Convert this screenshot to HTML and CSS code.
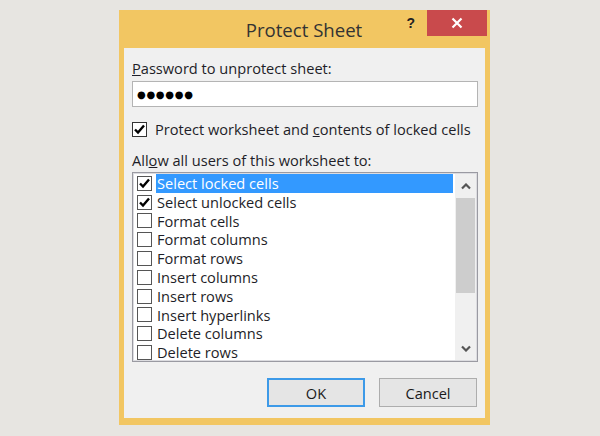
FILE: index.html
```html
<!DOCTYPE html>
<html>
<head>
<meta charset="utf-8">
<link rel="stylesheet" href="styles.css">
</head>
<body>
<div class="dialog">
  <div class="titlebar">
    <div></div>
    <div class="title">Protect Sheet</div>
    <div class="controls">
      <span class="help">?</span>
      <span class="close"><svg width="12" height="12" viewBox="0 0 12 12"><path d="M1.5 1.5L10.5 10.5M10.5 1.5L1.5 10.5" stroke="#fff" stroke-width="2.2" fill="none"/></svg></span>
    </div>
  </div>
  <div class="panel">
    <div class="label"><u>P</u>assword to unprotect sheet:</div>
    <div class="input"><span class="dots">●●●●●●</span></div>
    <div class="check-row">
      <span class="box"><svg width="13" height="13" viewBox="0 0 13 13"><path d="M2 6.5L5 9.5L11 2.5" stroke="#000" stroke-width="2.4" fill="none"/></svg></span>
      <span>Protect worksheet and <u>c</u>ontents of locked cells</span>
    </div>
    <div class="label allow">All<u>o</u>w all users of this worksheet to:</div>
    <div class="list">
      <div class="items">
        <div class="item"><span class="box sm"><svg width="13" height="13" viewBox="0 0 13 13"><path d="M2 6.5L5 9.5L11 2.5" stroke="#000" stroke-width="2.4" fill="none"/></svg></span><span class="text selected">Select locked cells</span></div>
        <div class="item"><span class="box sm"><svg width="13" height="13" viewBox="0 0 13 13"><path d="M2 6.5L5 9.5L11 2.5" stroke="#000" stroke-width="2.4" fill="none"/></svg></span><span class="text">Select unlocked cells</span></div>
        <div class="item"><span class="box sm"></span><span class="text">Format cells</span></div>
        <div class="item"><span class="box sm"></span><span class="text">Format columns</span></div>
        <div class="item"><span class="box sm"></span><span class="text">Format rows</span></div>
        <div class="item"><span class="box sm"></span><span class="text">Insert columns</span></div>
        <div class="item"><span class="box sm"></span><span class="text">Insert rows</span></div>
        <div class="item"><span class="box sm"></span><span class="text">Insert hyperlinks</span></div>
        <div class="item"><span class="box sm"></span><span class="text">Delete columns</span></div>
        <div class="item"><span class="box sm"></span><span class="text">Delete rows</span></div>
      </div>
      <div class="scrollbar">
        <div class="arrow"><svg width="10" height="7" viewBox="0 0 10 7"><path d="M1 5.5L5 1.5L9 5.5" stroke="#555" stroke-width="2.2" fill="none"/></svg></div>
        <div class="thumb"></div>
        <div class="track"></div>
        <div class="arrow"><svg width="10" height="7" viewBox="0 0 10 7"><path d="M1 1.5L5 5.5L9 1.5" stroke="#555" stroke-width="2.2" fill="none"/></svg></div>
      </div>
    </div>
    <div class="buttons">
      <div class="btn ok">OK</div>
      <div class="btn">Cancel</div>
    </div>
  </div>
</div>
</body>
</html>
```

FILE: styles.css
```css
html, body {
  margin: 0;
  padding: 0;
}
body {
  background: #e7e5e1;
  width: 600px;
  height: 436px;
  padding: 10px 0 0 119px;
  box-sizing: border-box;
  font-family: "Open Sans", "Noto Sans", sans-serif;
  font-size: 14.6px;
  color: #1e1e28;
}
.dialog {
  width: 371px;
  height: 415px;
  background: #f2c662;
  box-sizing: border-box;
  padding-bottom: 7px;
  display: flex;
  flex-direction: column;
}
.titlebar {
  height: 38px;
  display: grid;
  grid-template-columns: 1fr auto 1fr;
  padding-right: 3px;
}
.title {
  font-size: 18.6px;
  line-height: 38px;
  color: #333;
  padding-top: 1px;
  padding-left: 2px;
}
.controls {
  display: flex;
  justify-content: flex-end;
  align-items: flex-start;
}
.help {
  font-family: "Liberation Sans", sans-serif;
  font-weight: bold;
  font-size: 14px;
  color: #222;
  line-height: 26px;
  margin-right: 12px;
}
.close {
  width: 60px;
  height: 26px;
  background: #c94a4c;
  display: flex;
  align-items: center;
  justify-content: center;
}
.panel {
  margin: 0 5px;
  flex: 1;
  background: #f0f0f0;
  padding: 12px 7px 11px 8px;
  display: flex;
  flex-direction: column;
}
.label {
  line-height: 16px;
  height: 16px;
}
.input {
  margin-top: 5px;
  height: 26px;
  box-sizing: border-box;
  background: #fff;
  border: 1px solid #b4b4b4;
  display: flex;
  align-items: center;
  padding-left: 4px;
}
.dots {
  font-family: "DejaVu Sans", sans-serif;
  font-size: 10px;
  letter-spacing: 0.7px;
  color: #000;
}
.check-row {
  margin-top: 14px;
  height: 16px;
  line-height: 16px;
  display: flex;
  align-items: center;
  gap: 8px;
}
.box {
  width: 15px;
  height: 15px;
  box-sizing: border-box;
  border: 1px solid #333;
  background: #fff;
  display: flex;
  align-items: center;
  justify-content: center;
  flex: none;
}
.box.sm {
  border-color: #555;
}
.allow {
  margin-top: 15px;
}
.list {
  margin-top: 4px;
  height: 190px;
  box-sizing: border-box;
  border: 1px solid #9a9aa2;
  box-shadow: inset 0 0 0 1px #dcdce0;
  background: #fff;
  display: flex;
  padding: 1px 1px 1px 4px;
}
.items {
  flex: 1;
  display: flex;
  flex-direction: column;
  margin-right: 2px;
}
.item {
  height: 18.8px;
  display: flex;
  align-items: center;
  gap: 4px;
}
.text {
  flex: 1;
  height: 100%;
  line-height: 18.8px;
  padding-left: 1px;
}
.text.selected {
  background: #3399ff;
  color: #fff;
}
.scrollbar {
  width: 21px;
  display: flex;
  flex-direction: column;
  background: #f0f0f0;
}
.arrow {
  height: 24px;
  display: flex;
  align-items: center;
  justify-content: center;
}
.thumb {
  height: 95px;
  background: #cdcdcd;
  margin: 0 1px;
}
.track {
  flex: 1;
}
.buttons {
  margin-top: 16px;
  display: flex;
  justify-content: flex-end;
  gap: 14px;
  padding-right: 1px;
}
.btn {
  width: 98px;
  height: 29px;
  box-sizing: border-box;
  border: 1px solid #adadad;
  background: #e5e5e5;
  display: flex;
  align-items: center;
  justify-content: center;
  color: #1a1a1a;
}
.btn.ok {
  border: 2px solid #3d9ae8;
}
```
